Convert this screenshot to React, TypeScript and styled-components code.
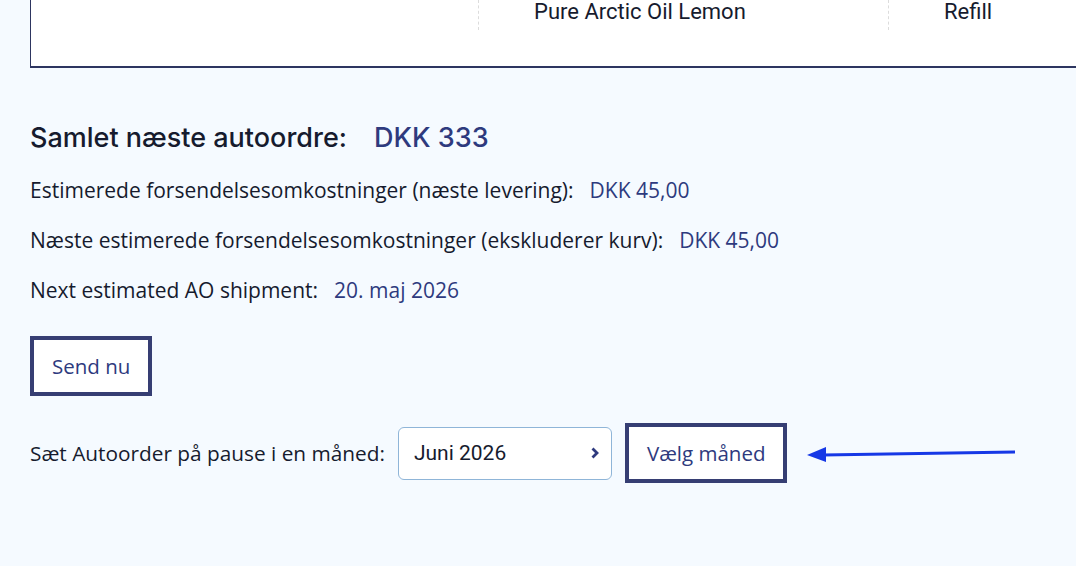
import React from "react";
import styled, { createGlobalStyle } from "styled-components";

const Global = createGlobalStyle`
  html, body { margin: 0; padding: 0; }
  body {
    background: #f5faff;
    font-family: "Open Sans", "Noto Sans", sans-serif;
    color: #161b2e;
    width: 1076px;
    height: 566px;
    overflow: hidden;
  }
`;

const Page = styled.div`
  display: flex;
  flex-direction: column;
`;

const Card = styled.div`
  margin-left: 30px;
  height: 68px;
  background: #ffffff;
  border-left: 1px solid #2d3560;
  border-bottom: 2px solid #2d3560;
  box-sizing: border-box;
`;

const TableRow = styled.div`
  display: grid;
  grid-template-columns: 447px 410px 1fr;
  height: 30px;
`;

const Cell = styled.div<{ $divider?: boolean }>`
  border-left: ${(p) => (p.$divider ? "1px dashed #dcdcdc" : "none")};
  padding-left: 55px;
  font-family: "Roboto", sans-serif;
  font-weight: 400;
  font-size: 22px;
  line-height: 24px;
  color: #161b2e;
`;

const Content = styled.div`
  padding: 54px 0 0 30px;
  display: flex;
  flex-direction: column;
`;

const Heading = styled.div`
  display: flex;
  gap: 27px;
  font-family: "Inter", "Open Sans", sans-serif;
  font-size: 27px;
  line-height: 32px;
  font-weight: 500;
  margin-bottom: 23px;
`;

const Value = styled.span`
  color: #2e3a7e;
`;

const InfoRow = styled.div`
  display: flex;
  gap: 16px;
  font-size: 21px;
  line-height: 26px;
  margin-bottom: 24px;
`;

const OutlineButton = styled.button`
  box-sizing: border-box;
  background: #ffffff;
  border: 4px solid #363e73;
  color: #2e3a7e;
  font-family: "Open Sans", "Noto Sans", sans-serif;
  font-size: 20.5px;
  padding: 0 18px;
  height: 60px;
  cursor: pointer;
`;

const SendRow = styled.div`
  display: flex;
  margin-top: 9px;
`;

const PauseRow = styled.div`
  display: flex;
  align-items: center;
  margin-top: 27px;
  font-size: 20.8px;
`;

const PauseLabel = styled.span`
  margin-right: 13px;
`;

const Select = styled.div`
  box-sizing: border-box;
  width: 214px;
  height: 53px;
  background: #ffffff;
  border: 1px solid #8fb5d8;
  border-radius: 6px;
  display: flex;
  align-items: center;
  justify-content: space-between;
  padding: 0 11px 0 15px;
  font-family: "Roboto", sans-serif;
  font-weight: 400;
  font-size: 21px;
  color: #161b2e;
  margin-right: 13px;
`;

const Arrow = styled.svg`
  margin-left: 20px;
`;

export default function App() {
  return (
    <Page>
      <Global />
      <Card>
        <TableRow>
          <Cell />
          <Cell $divider>Pure Arctic Oil Lemon</Cell>
          <Cell $divider>Refill</Cell>
        </TableRow>
      </Card>
      <Content>
        <Heading>
          <span>Samlet næste autoordre:</span>
          <Value>DKK 333</Value>
        </Heading>
        <InfoRow>
          <span>Estimerede forsendelsesomkostninger (næste levering):</span>
          <Value>DKK 45,00</Value>
        </InfoRow>
        <InfoRow>
          <span>Næste estimerede forsendelsesomkostninger (ekskluderer kurv):</span>
          <Value>DKK 45,00</Value>
        </InfoRow>
        <InfoRow>
          <span>Next estimated AO shipment:</span>
          <Value>20. maj 2026</Value>
        </InfoRow>
        <SendRow>
          <OutlineButton>Send nu</OutlineButton>
        </SendRow>
        <PauseRow>
          <PauseLabel>Sæt Autoorder på pause i en måned:</PauseLabel>
          <Select>
            <span>Juni 2026</span>
            <svg width="10" height="14" viewBox="0 0 10 14">
              <path d="M2.5 2.5 L7 7 L2.5 11.5" fill="none" stroke="#2e3a7e" strokeWidth="2.8" />
            </svg>
          </Select>
          <OutlineButton>Vælg måned</OutlineButton>
          <Arrow width="212" height="20" viewBox="0 0 212 20">
            <path d="M16 12 L208 9" stroke="#1638e6" strokeWidth="3.2" fill="none" />
            <path d="M0 12 L19 4 L19 19 Z" fill="#1638e6" />
          </Arrow>
        </PauseRow>
      </Content>
    </Page>
  );
}
